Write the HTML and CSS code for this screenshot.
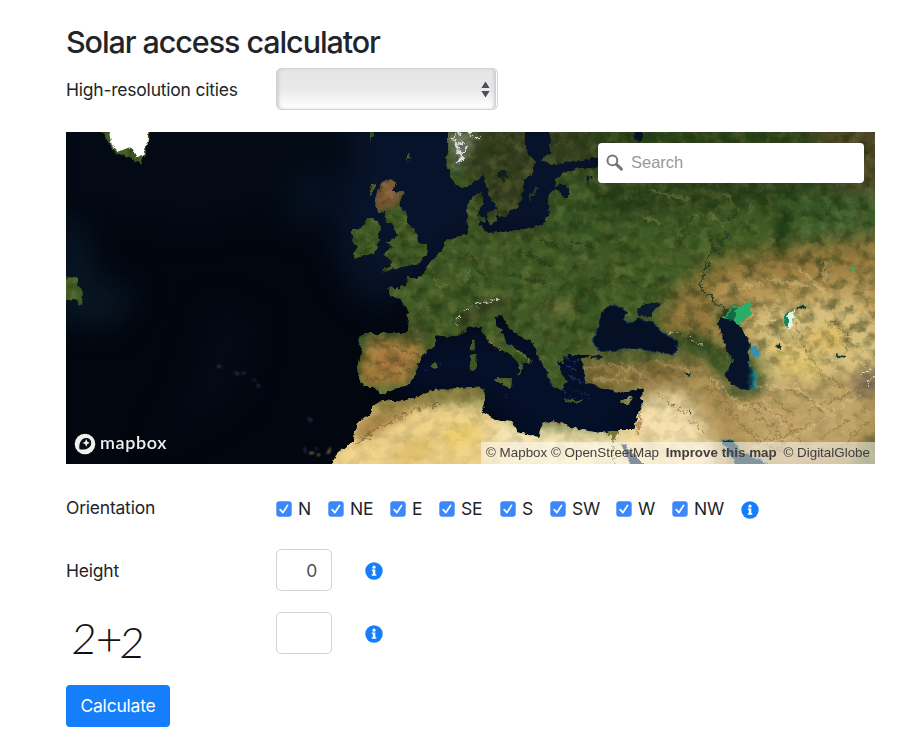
FILE: index.html
```html
<!DOCTYPE html>
<html lang="en">
<head>
<meta charset="utf-8">
<title>Solar access calculator</title>
<link rel="stylesheet" href="styles.css">
</head>
<body>
<svg class="defs" width="0" height="0" aria-hidden="true">
  <symbol id="info" viewBox="0 0 18 18"><circle cx="9" cy="9" r="8.7" fill="#147efb"/><circle cx="9" cy="5.2" r="1.6" fill="#fff"/><path d="M6.8 7.5h3.5v4.7h1v1.6H6.8v-1.6h1V9.1h-1z" fill="#fff"/></symbol>
  <symbol id="check" viewBox="0 0 16 16"><rect x=".3" y=".3" width="15.4" height="15.4" rx="3" fill="#3c87fa"/><path d="M4.2 8.6 6.9 11.6 11.6 4.4" fill="none" stroke="#fff" stroke-width="1.7" stroke-linecap="round" stroke-linejoin="round"/></symbol>
</svg>
<main class="page">
  <h1>Solar access calculator</h1>
  <div class="row cities">
    <span class="label">High-resolution cities</span>
    <div class="select" role="combobox"><svg width="9" height="17" viewBox="0 0 9 17"><path d="M4.5 .5 8.6 7H.4zM4.5 16.5.4 10h8.2z" fill="#495057"/></svg></div>
  </div>
  <section class="map">
    <svg class="terrain" width="809" height="332" viewBox="66 132 809 332" aria-hidden="true">
      <defs>
        <clipPath id="land">
          <path d="M448 120 448 148 446 157 448 168 453 182 462 188 470 185 478 178 484 174 487 188 492 200 497 208 498 217 505 216 510 209 518 208 522 197 523 180 533 173 536 163 530 157 525 145 525 120Z"/>
          <path d="M550 120 550 153 540 160 553 164 573 161 600 157 606 162 597 169 580 168 565 172 555 179 555 187 561 183 569 188 569 198 563 197 557 190 552 191 548 199 550 213 543 225 532 227 520 230 503 232 487 233 480 225 478 212 483 205 482 192 472 197 467 205 468 233 447 240 442 250 427 265 425 273 415 278 407 278 406 287 401 283 400 288 387 288 390 293 402 300 408 312 407 333 383 333 363 333 358 340 362 348 357 372 362 387 373 387 380 395 397 389 410 383 417 370 420 358 435 345 435 335 450 337 460 335 470 327 480 328 487 340 500 350 513 357 520 365 517 378 523 370 522 362 531 364 530 358 517 350 507 342 502 332 495 325 495 317 503 315 508 327 523 338 535 345 538 357 547 373 553 387 562 390 567 382 562 376 560 370 557 360 563 363 563 356 570 355 583 355 591 355 582 360 583 372 587 383 598 387 607 390 620 392 633 390 643 387 642 403 633 430 620 430 607 432 600 433 573 428 553 420 543 423 538 437 530 435 517 432 512 422 495 420 483 413 482 405 485 397 483 388 470 387 433 390 417 397 400 402 383 400 375 403 372 412 357 423 353 442 337 453 332 464 330 476H887V120Z"/>
          <path d="M383 180 396 181 392 192 404 192 399 205 407 213 408 223 417 235 418 243 427 245 426 255 420 263 402 267 390 269 382 273 393 262 383 255 392 248 387 242 397 237 393 225 387 222 385 212 378 213 375 200Z"/>
          <path d="M367 218 378 220 381 228 378 242 375 253 353 259 357 248 352 240 352 230 362 227ZM372 183 377 184 370 196ZM487 213 496 209 497 221 489 225ZM479 216 484 216 485 224 480 222ZM531 193 537 187 535 195 530 200ZM471 341 475 340 475 350 471 349ZM470 355 477 353 476 371 470 370ZM495 378 512 378 511 389 496 381ZM564 399 582 401 580 403 565 402ZM620 401 633 396 628 404 621 404ZM431 367 436 363 438 368ZM408 154 411 153 408 163ZM370 132 374 132 372 143Z"/>
          <path d="M56 278 77 277 77 285 84 295 82 306 74 299 56 302Z"/>
          <path d="M98 120 102 132 110 145 115 153 130 157 140 164 145 155 150 135 149 120Z"/>
        </clipPath>
        <filter id="deep" x="-20%" y="-20%" width="140%" height="140%" color-interpolation-filters="sRGB"><feGaussianBlur stdDeviation="14"/></filter>
        <filter id="soft" x="-40%" y="-40%" width="180%" height="180%" color-interpolation-filters="sRGB"><feGaussianBlur stdDeviation="9"/></filter>
        <filter id="soft4" x="-40%" y="-40%" width="180%" height="180%" color-interpolation-filters="sRGB"><feGaussianBlur stdDeviation="4"/></filter>
        <filter id="glow" x="-20%" y="-20%" width="140%" height="140%" color-interpolation-filters="sRGB"><feGaussianBlur stdDeviation="1"/></filter>
        <filter id="coast" x="54" y="120" width="833" height="356" filterUnits="userSpaceOnUse" color-interpolation-filters="sRGB">
          <feTurbulence type="fractalNoise" baseFrequency=".16" numOctaves="3" seed="8"/>
          <feDisplacementMap in="SourceGraphic" scale="6" xChannelSelector="R" yChannelSelector="G"/>
          <feGaussianBlur stdDeviation=".35"/>
        </filter>
        <filter id="crinkle" x="-20%" y="-20%" width="140%" height="140%" color-interpolation-filters="sRGB">
          <feTurbulence type="fractalNoise" baseFrequency=".18" numOctaves="3" seed="3"/>
          <feDisplacementMap in="SourceGraphic" scale="9" xChannelSelector="R" yChannelSelector="G"/>
          <feGaussianBlur stdDeviation=".6"/>
        </filter>
        <filter id="shade" x="54" y="120" width="833" height="356" filterUnits="userSpaceOnUse" color-interpolation-filters="sRGB">
          <feTurbulence type="fractalNoise" baseFrequency=".07 .09" numOctaves="6" seed="21"/>
          <feColorMatrix values="0 0 0 0 .1  0 0 0 0 .16  0 0 0 0 .04  2.6 0 0 0 -1.05"/>
        </filter>
        <filter id="light" x="54" y="120" width="833" height="356" filterUnits="userSpaceOnUse" color-interpolation-filters="sRGB">
          <feTurbulence type="fractalNoise" baseFrequency=".09" numOctaves="6" seed="5"/>
          <feColorMatrix values="0 0 0 0 .78  0 0 0 0 .72  0 0 0 0 .4  0 2.6 0 0 -1.1"/>
        </filter>
        <linearGradient id="caspian" x1="0" y1="0" x2="1" y2="0"><stop offset=".76" stop-color="#061329"/><stop offset="1" stop-color="#2d9e9c"/></linearGradient>
        <linearGradient id="drydown" x1="0" y1="0" x2="0" y2="1"><stop offset=".6" stop-color="#fff"/><stop offset=".78" stop-color="#666"/><stop offset="1" stop-color="#222"/></linearGradient>
        <mask id="north" maskUnits="userSpaceOnUse" x="54" y="120" width="833" height="356"><rect x="54" y="120" width="833" height="356" fill="url(#drydown)"/></mask>
      </defs>
      <rect x="66" y="132" width="809" height="332" fill="#02060f"/>
      <g filter="url(#deep)">
        <path d="M350 110H610V240H470L410 290 375 300 345 250 320 190 330 150Z" fill="#07132a"/>
        <path d="M60 110H350V190L200 230 60 210Z" fill="#030a15"/>
        <path d="M50 215 85 225 100 280 140 290 110 330 50 320Z" fill="#071522"/>
        <path d="M300 170 330 180 310 225 285 230ZM325 235 370 250 395 320 350 290Z" fill="#061224"/>
        <path d="M410 340 490 320 600 350 660 400 620 450H530L470 395 400 400Z" fill="#040f28"/>
        <path d="M210 300 260 320 240 400 150 450 180 400Z" fill="#030a14"/>
      </g>
      <g fill="#343765" opacity=".75" filter="url(#glow)"><path d="M217 365h4v3h-4zM233 371l8 2-4 3zM242 372h4v2h-4zM252 378l6 3h-4zM256 384l5 1-3 3zM307 417l6 2-3 4zM304 447h2v6h-2zM315 447l4 1-3 2z"/><path d="M309 452h5v2h-5zM317 454h3v2h-3zM326 454l5-8-1 7z" fill="#b58c65"/></g>
      <g filter="url(#coast)">
        <g clip-path="url(#land)">
          <rect x="54" y="120" width="833" height="356" fill="#3f5a26"/>
          <g filter="url(#soft)">
            <path d="M440 110H620V230H490Z" fill="#333d1f"/>
            <path d="M545 165H690L690 260 610 250 540 240Z" fill="#375423"/>
            <path d="M590 110H895V205L770 205 600 220Z" fill="#2b431b"/>
            <path d="M800 110H895V205L850 200Z" fill="#4c4627"/>
            <path d="M540 300 600 290 640 220 760 215 750 250 690 280 670 320Z" fill="#405c26"/>
            <path d="M785 245 895 205V340H690L655 330 675 290 715 262Z" fill="#91763c"/>
            <path d="M710 280 895 270V350H720Z" fill="#b59554"/>
            <path d="M745 310 850 295 895 330V390L770 400Z" fill="#d9c07f"/>
            <path d="M775 200 895 190V234L790 245Z" fill="#3b5c2b"/>
            <path d="M590 362 690 350 740 390 895 375V484H690L630 395 590 392Z" fill="#af9156"/>
            <path d="M582 355H690V393H575Z" fill="#8f7540"/>
            <path d="M635 398 680 388 710 430 725 484H600L615 430Z" fill="#f7e1af"/>
            <path d="M735 395 860 385 875 430 800 464H750Z" fill="#c4a66b"/>
            <path d="M325 415 390 395 490 400 530 430 640 430V490H310Z" fill="#f2d48d"/>
            <path d="M490 418 620 430 640 484H500Z" fill="#f7e7b5"/>
          </g>
          <g filter="url(#soft4)">
            <path d="M372 340 415 342 428 350 414 370 410 383 375 386 358 380 365 350Z" fill="#a57b3d"/>
            <path d="M355 330H430V338L370 340Z" fill="#4a4d26"/>
            <path d="M385 350h20l5 15-15 8-18-3z" fill="#b07c44"/>
            <path d="M370 400 480 385 482 397 420 404 380 413Z" fill="#8d7b3f"/>
            <path d="M350 440 360 416 420 407 400 420 370 438Z" fill="#b08b50"/>
            <path d="M400 443 425 433 440 446 420 464H390Z" fill="#e4c372"/>
            <path d="M440 430 475 422 480 440 450 452Z" fill="#f2d272"/>
            <path d="M374 182 395 176 403 197 390 207 374 212Z" fill="#87583a"/>
            <path d="M448 132 478 130 463 165 455 175Z" fill="#6b7562"/>
            <path d="M550 325 580 323 600 298 580 280 565 287 582 300 573 315Z" fill="#2c4a1b"/>
            <path d="M557 302 573 298 574 311 555 320 542 303Z" fill="#687039"/>
            <path d="M455 322 470 308 495 299 518 300 493 309 463 328Z" fill="#323c20"/>
            <path d="M671 333 705 337 725 360 727 378 703 354 680 349Z" fill="#365024"/>
            <path d="M717 309 738 303 736 319 716 323Z" fill="#374421"/>
            <path d="M595 352 650 355 682 352 684 358 640 362 600 360Z" fill="#44582c"/>
            <path d="M782 185 790 210 795 212 785 256 778 256 776 224Z" fill="#1f3f17"/>
            <path d="M815 328 840 326 849 350 822 351 802 344Z" fill="#e0bd68"/>
            <path d="M765 345 800 345 825 363 812 380 780 370Z" fill="#e6c975"/>
            <path d="M728 383 748 391 767 381 755 395 740 397 725 391Z" fill="#374b24"/>
            <path d="M850 380 885 360V390L860 400Z" fill="#8c765d"/>
            <path d="M865 435H885V474H850Z" fill="#737038"/>
          </g>
          <g mask="url(#north)"><rect x="54" y="120" width="833" height="356" filter="url(#shade)" opacity=".5"/></g>
          <rect x="54" y="120" width="833" height="356" filter="url(#light)" opacity=".2"/>
          <g filter="url(#crinkle)" fill="none" stroke-linecap="round">
            <path d="M390 345 405 350 420 356M365 366 389 361 411 365M367 379 390 377 414 368M360 438 390 422 420 408 438 404M355 445 370 438" stroke="#6d532a" stroke-width="1.6" opacity=".6"/>
            <path d="M457 324 461 311 470 307 482 301 502 300" stroke="#c2c6b2" stroke-width="2" stroke-dasharray="1.5 4 2.5 3.5"/>
            <path d="M452 137 462 134M455 145 465 142M459 155 466 150M459 163 462 153M470 134 478 138M453 140l8 14" stroke="#d6dcd8" stroke-width="2.6" stroke-dasharray="3 2.5"/>
            <path d="M671 332 690 338 701 345" stroke="#b7b496" stroke-width="1.4" stroke-dasharray="1 4"/>
            <path d="M699 286 709 256 724 242 727 220 740 212M699 286 720 306 733 315" stroke="#253e23" stroke-width="1.6"/>
            <path d="M735 265 760 255 779 260M668 320 685 290 688 270M795 325 810 357 826 375 845 389M656 394 685 413 706 435M832 320 848 336 847 352" stroke="#6d6132" stroke-width="1" opacity=".7"/>
            <path d="M690 352 727 402 755 440 785 452M705 385 740 424 770 440 810 426M742 405q25 8 28 27M765 395q30 13 28 30M785 390q30 8 39 24M810 410 870 385M820 440l45-31M834 454 870 420M740 398q50 15 62 45M747 420q32-3 37 25" stroke="#7a6132" opacity=".45" stroke-width="1.5"/>
            <path d="M750 385 800 390 835 418M710 376 745 410M750 448 800 435 865 390M822 356 865 365M762 400 785 425" stroke="#ecd6a2" opacity=".35" stroke-width="2"/>
            <path d="M584 368 610 365 635 370 650 380M596 380 632 380M655 360 690 372M619 373l12-4" stroke="#d3b984" opacity=".3" stroke-width="2.5"/>
            <path d="M607 432 618 430 613 440ZM613 440 614 464" fill="#747735" stroke="#747735" stroke-width="1.5"/>
            <path d="M641 405 638 434M551 421 562 422" stroke="#a56d37" stroke-width="1.8" opacity=".7"/>
            <path d="M488 341 507 357 520 369M517 351 530 360" stroke="#7c6a37" stroke-width="2.5"/>
            <path d="M740 288 760 284M770 280 812 286M800 270 824 292M825 260v25" stroke="#ecd79a" opacity=".3" stroke-width="4"/>
            <path d="M862 374l8-5M868 382l7-7" stroke="#eee8db" stroke-width="2" stroke-dasharray="1 3" opacity=".8"/>
            <path d="M499 175l5-4-1 7M588 178v7" stroke="#101e1c" stroke-width="3"/>
            <path d="M680 245 686 225 695 215M712 236v14M725 195l25-8M740 207l20-10M825 215l12-18M620 275l20 12M470 255l14 22M520 250l30 15M510 275l35 8M540 240l18 6M570 240l22 8" stroke="#243d18" opacity=".7" stroke-width="2.2"/>
            <path d="M695 215h18l12 12M725 192l14 20M650 190l40 10M640 215l20 8M432 280l14 8M470 268l-6 14" stroke="#6f7d3d" opacity=".5" stroke-width="2.5"/>
          </g>
          <path d="M106 120 112 146 118 152 130 147 137 157 143 156 147 144 150 120Z" fill="#fff"/>
        </g>
        <path d="M610 305 623 308 627 313 623 320 630 322 638 318 653 322 662 333 677 340 677 350 670 354 653 352 627 347 613 352 597 350 592 340 598 325 603 313Z" fill="#051025" stroke="#183b52" stroke-width="1"/>
        <path d="M637 310 645 304 662 302 653 310 653 317 640 316ZM591 356 600 355 602 358 592 359Z" fill="#0a1930"/>
        <path d="M722 318 733 307 750 303 752 313 740 325 730 321Z" fill="#29ad68"/>
        <path d="M725 317 733 309 737 308 733 321Z" fill="#176b43"/>
        <path d="M717 325 722 318 733 320 740 327 747 337 750 345 748 357 750 365 756 372 757 387 747 390 730 385 725 373 733 360 727 350Z" fill="url(#caspian)"/>
        <path d="M750 347 757 345 762 355 756 357 751 355Z" fill="#378eb0"/>
        <path d="M786 313 792 312 794 320 788 327 784 322Z" fill="#138563"/><path d="M788 314 794 311 793 326 788 328Z" fill="#e6f7de"/>
        <path d="M797 308 802 305 804 309M776 344 780 343 781 350 777 349ZM684 374 690 372 688 376ZM687 410l4 3-1 2z" fill="#102f37"/>
        <path d="M850 268 855 267 854 272Z" fill="#30ae66"/>
        <path d="M634 129 643 130 643 141 638 143 633 138Z" fill="#061228"/>
        <path d="M722 440 733 440 740 450 760 460 778 468H737L727 452Z" fill="#0b2a40" stroke="#4b9b8a" stroke-width="1"/>
        <path d="M622 442 633 453 646 468H632L625 454Z" fill="#0b1d3b"/>
        <path d="M798 309l4-3 4 2M835 355l10 2" fill="none" stroke="#173f32" stroke-width="2"/>
      </g>
      <g fill="none" stroke="#26386f" stroke-width="1.2" opacity=".8" filter="url(#crinkle)"><path d="M564 358l10 4 8-3M570 371l7-3M573 380l8 2M560 388l6 6M576 390l7 4M586 391l3 8M566 366l12 4M570 376l14 8M422 371l6-2M440 363l3 1M506 394l2 3M569 397l15 2M547 377l4 7"/></g>
    </svg>
    <div class="search"><svg width="18" height="18" viewBox="0 0 18 18"><circle cx="6.4" cy="6.4" r="4.9" fill="none" stroke="#757575" stroke-width="2"/><path d="m10.4 10.4 5 4.8" stroke="#757575" stroke-width="3" stroke-linecap="round"/></svg><span>Search</span></div>
    <div class="brand"><svg width="22" height="22" viewBox="0 0 22 22"><circle cx="11" cy="11" r="10.3" fill="#f0f0ef"/><path d="M5.5 16.3C4.4 9.5 8 4.8 12.2 4.9c3.3 0 5.1 2.3 5 5-.1 4.5-4.6 7.5-11.7 6.4z" fill="#080d15"/><path d="m12.2 6.1 1.2 2.7 2.6 1.1-2.6 1.2-1.2 2.6-1.1-2.6-2.7-1.2 2.7-1.1z" fill="#f0f0ef"/></svg><span>mapbox</span></div>
    <div class="attribution"><span>© Mapbox © OpenStreetMap</span> <b>Improve this map</b> <span>© DigitalGlobe</span></div>
  </section>
  <div class="row orientation">
    <span class="label">Orientation</span>
    <div class="checks">
      <span><svg><use href="#check"/></svg>N</span><span><svg><use href="#check"/></svg>NE</span><span><svg><use href="#check"/></svg>E</span><span><svg><use href="#check"/></svg>SE</span><span><svg><use href="#check"/></svg>S</span><span><svg><use href="#check"/></svg>SW</span><span><svg><use href="#check"/></svg>W</span><span><svg><use href="#check"/></svg>NW</span>
      <svg class="info"><use href="#info"/></svg>
    </div>
  </div>
  <div class="row height"><span class="label">Height</span><div class="box">0</div><svg class="info"><use href="#info"/></svg></div>
  <div class="row captcha"><div class="sum"><span class="first">2</span><span class="plus">+</span><span class="second">2</span></div><div class="box"></div><svg class="info"><use href="#info"/></svg></div>
  <button class="calculate">Calculate</button>
</main>
</body>
</html>
```
FILE: styles.css
```css
* { box-sizing: border-box; }
body { margin: 0; background: #fff; color: #212529; font: 17.5px/24px Inter, "Liberation Sans", sans-serif; letter-spacing: -.22px; }
svg { display: block; flex: none; }
.defs { position: absolute; }
.page { width: 809px; margin-left: 66px; padding-top: 23px; }
h1 { margin: 0; height: 45px; font-size: 30.5px; line-height: 37px; font-weight: 550; letter-spacing: -1.08px; white-space: nowrap; }
.row { display: flex; align-items: center; height: 42px; }
.label { width: 210px; white-space: nowrap; }
.cities .label { padding-top: 1px; }
.select { display: flex; justify-content: flex-end; align-items: center; width: 222px; height: 42px; padding-right: 7px; border: 1px solid #ced4da; border-radius: 5px; background: linear-gradient(#e5e5e5, #e9e9e9 50%, #fff); box-shadow: inset 3px 0 3px -1px #d0d0d0, inset -1px 0 #fff, inset -4px 0 3px -1px #ccc; }
.map { position: relative; margin-top: 22px; height: 332px; overflow: hidden; }
.search { position: absolute; top: 11px; right: 11px; display: flex; align-items: center; gap: 7px; width: 266px; height: 40px; padding: 0 0 1px 8px; border-radius: 4px; background: #fff; color: #999; font: 16.5px "Liberation Sans", sans-serif; letter-spacing: 0; }
.brand { position: absolute; left: 8px; top: 301px; display: flex; align-items: center; gap: 4px; height: 22px; color: #f0f0ef; font: 600 18px/20px Lato, sans-serif; letter-spacing: .6px; }
.brand span { padding-bottom: 4px; }
.attribution { position: absolute; right: 0; bottom: 0; width: 394px; height: 22px; padding: 0 5px; display: flex; justify-content: space-between; background: rgba(255,255,255,.5); color: #404040; font: 13.4px/22px "Liberation Sans", sans-serif; letter-spacing: 0; white-space: nowrap; }
.orientation { margin-top: 23px; }
.orientation .label { padding-bottom: 1px; }
.checks { display: grid; grid-template-columns: 52px 62px 49px 61px 50px 66px 56px 69px 18px; align-items: center; }
.checks span { display: flex; align-items: center; gap: 6px; padding-top: 1px; }
.checks .info { margin-top: 3px; }
.checks span svg { width: 16px; height: 16px; }
.info { width: 18px; height: 18px; }
.height { margin-top: 20px; }
.box { width: 56px; height: 42px; padding: 9px 14px 7px; border: 1px solid #ced4da; border-radius: 5px; color: #495057; text-align: right; }
.height .label { padding-top: 1px; }
.box + .info { margin-left: 33px; margin-top: 2px; }
.captcha { margin-top: 21px; }
.sum { display: flex; align-items: center; width: 210px; height: 42px; padding-left: 6px; color: #111; font: 300 42px/42px Lato, sans-serif; letter-spacing: 0; }
.sum span { display: block; width: 24px; }
.sum .first { transform: translateY(5px) skewX(-4deg); }
.sum .plus { transform: translate(1px, 4px) scale(1.1); }
.sum .second { transform: translateY(9px) skewX(-4deg); }
.calculate { display: block; width: 104px; height: 42px; margin-top: 31px; padding: 0; border: 0; border-radius: 4px; background: #147efb; color: #fff; font: inherit; letter-spacing: -.2px; }
```
